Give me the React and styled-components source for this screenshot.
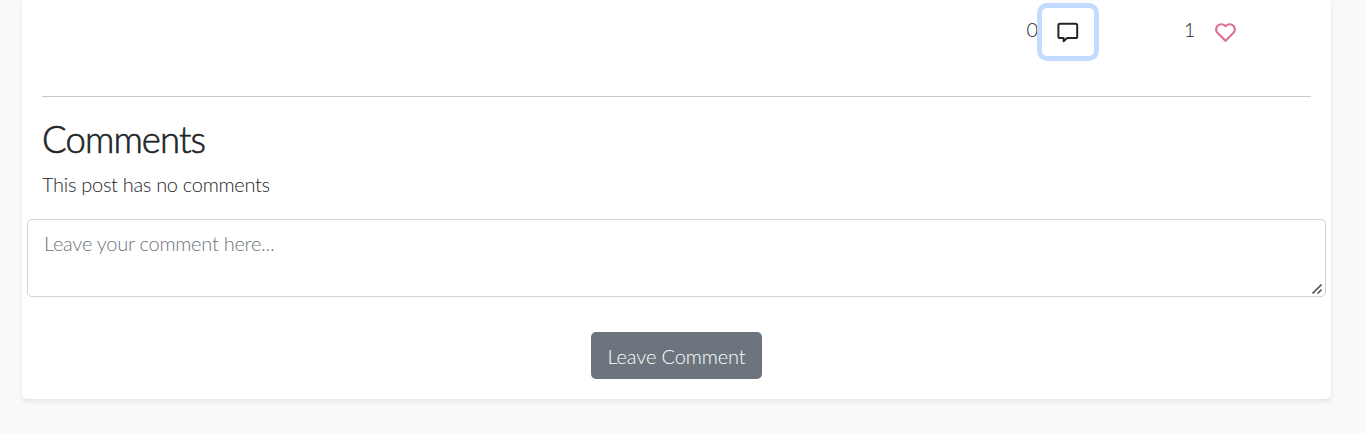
import React from "react";
import styled, { createGlobalStyle } from "styled-components";
import { BiHeart } from "react-icons/bi";

const GlobalStyle = createGlobalStyle`
  *, *::before, *::after { box-sizing: border-box; }
  body {
    margin: 0;
    min-height: 100vh;
    background: #f7f9fb;
    color: #212529;
    font: 300 20px/30px Lato, "Liberation Sans", sans-serif;
    letter-spacing: -0.3px;
  }
`;

const Page = styled.div`
  min-height: 433px;
  padding: 0 35px 34px 22px;
`;

const Card = styled.main`
  height: 399px;
  background: #fff;
  border-radius: 0 0 5px 5px;
  box-shadow: 0 2.5px 5px rgba(0, 0, 0, 0.075);
`;

const Actions = styled.div`
  display: flex;
  align-items: flex-start;
  justify-content: flex-end;
  height: 96px;
  padding: 8px 80px 0 0;
`;

const Count = styled.span`
  padding-top: 6px;
`;

const IconButton = styled.button`
  display: flex;
  align-items: center;
  justify-content: center;
  width: 52px;
  height: 48px;
  padding: 0;
  border: 0;
  border-radius: 5px;
  background: #fff;
  color: ${(p) => p.$color};
  margin: 0 ${(p) => p.$after}px 0 ${(p) => p.$before}px;
  box-shadow: ${(p) => (p.$focused ? "0 0 0 5px #c2dbfe" : "none")};
  svg { width: 25px; height: 25px; }
`;

const Divider = styled.hr`
  height: 1px;
  margin: 0 20px;
  border: 0;
  background: #c8c9ca;
`;

const Heading = styled.h2`
  margin: 20px 20px 0;
  font-size: 36.5px;
  font-weight: 300;
  line-height: 44px;
  letter-spacing: -0.9px;
  -webkit-text-stroke: 0.6px currentColor;
`;

const Empty = styled.p`
  margin: 8px 20px 0;
`;

const CommentForm = styled.form`
  display: flex;
  flex-direction: column;
  align-items: center;
  padding: 20px 5px 0;
`;

const InputFrame = styled.div`
  position: relative;
  width: 100%;
`;

const CommentBox = styled.textarea`
  display: block;
  width: 100%;
  height: 78px;
  padding: 8px 16px;
  border: 1px solid #ced4da;
  border-radius: 5px;
  background: #fff;
  color: inherit;
  font: inherit;
  letter-spacing: -0.25px;
  resize: none;
  &::placeholder { color: #6c757d; opacity: 1; }
`;

const ResizeGrip = styled.svg`
  position: absolute;
  right: 4px;
  bottom: 3px;
  width: 10px;
  height: 10px;
  pointer-events: none;
`;

const SubmitButton = styled.button`
  width: 171px;
  height: 47px;
  margin-top: 35px;
  padding: 0;
  border: 0;
  border-radius: 5px;
  background: #6c757d;
  color: #fff;
  font: inherit;
  letter-spacing: -0.12px;
`;

function CommentIcon() {
  return (
    <svg viewBox="0 0 25 25" fill="none" stroke="currentColor" strokeWidth="2" strokeLinejoin="round">
      <path d="M5 3.7h15.6q1.6 0 1.6 1.6v11.2q0 1.6-1.6 1.6H12.2L8.6 21.3V18.1H5q-1.6 0-1.6-1.6V5.3Q3.4 3.7 5 3.7Z" />
    </svg>
  );
}

export default function App() {
  return (
    <Page>
      <GlobalStyle />
      <Card>
        <Actions>
          <Count>0</Count>
          <IconButton type="button" aria-label="Comments" $color="#212529" $before={4} $after={90} $focused>
            <CommentIcon />
          </IconButton>
          <Count>1</Count>
          <IconButton type="button" aria-label="Like" $color="#db7093" $before={4} $after={0}>
            <BiHeart />
          </IconButton>
        </Actions>
        <Divider />
        <Heading>Comments</Heading>
        <Empty>This post has no comments</Empty>
        <CommentForm>
          <InputFrame>
            <CommentBox placeholder="Leave your comment here..." />
            <ResizeGrip viewBox="0 0 10 10" fill="none" stroke="#55575a" strokeWidth="1.6">
              <path d="M.5 9.5 9.5.5M5.5 9.5l4-4" />
            </ResizeGrip>
          </InputFrame>
          <SubmitButton type="button">Leave Comment</SubmitButton>
        </CommentForm>
      </Card>
    </Page>
  );
}
